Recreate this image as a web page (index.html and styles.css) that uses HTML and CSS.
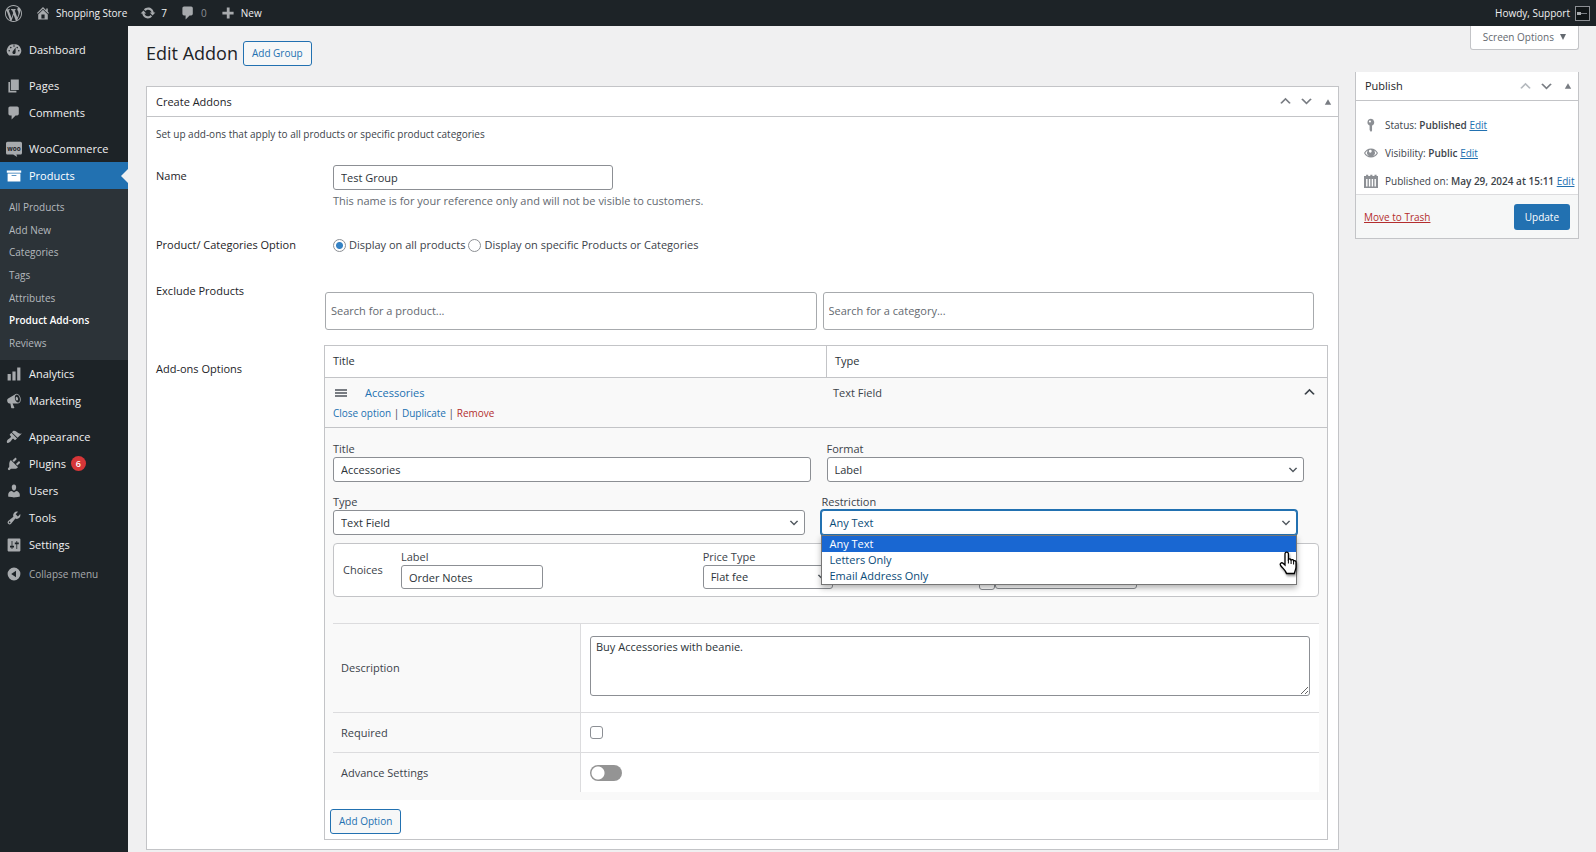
FILE: index.html
```
<!DOCTYPE html>
<html lang="en">
<head>
    <meta charset="UTF-8">
    <meta name="viewport" content="width=device-width, initial-scale=1.0">
    <title>Edit Addon - Shopping Store</title>
    <link rel="stylesheet" href="styles.css">
</head>
<body>
    <svg class="sprite" aria-hidden="true">
        <symbol id="i-down" viewBox="0 0 20 20"><path d="M5 6l5 5 5-5 2 1-7 7-7-7z"/></symbol>
        <symbol id="i-up" viewBox="0 0 20 20"><path d="M15 13l-5-5-5 5-2-1 7-7 7 7z"/></symbol>
        <symbol id="i-tri" viewBox="0 0 20 20"><path d="M2 17L10 3l8 14z"/></symbol>
        <symbol id="i-comment" viewBox="0 0 20 20"><path d="M5 2h9c1.1 0 2 .9 2 2v7c0 1.1-.9 2-2 2h-2l-5 5v-5H5c-1.1 0-2-.9-2-2V4c0-1.1.9-2 2-2z"/></symbol>
    </svg>

    <header class="adminbar">
        <a class="bar-item" href="#" aria-label="About WordPress"><svg class="icon icon-wp" viewBox="0 0 20 20"><path d="M20 10c0-5.51-4.49-10-10-10C4.48 0 0 4.49 0 10c0 5.52 4.48 10 10 10 5.51 0 10-4.48 10-10zM7.78 15.37L4.37 6.22c.55-.02 1.17-.08 1.17-.08.5-.06.44-1.13-.06-1.11 0 0-1.45.11-2.37.11-.18 0-.37 0-.58-.01C4.12 2.69 6.87 1.11 10 1.11c2.33 0 4.45.87 6.05 2.34-.68-.11-1.65.39-1.65 1.58 0 .74.45 1.36.9 2.1.35.61.55 1.36.55 2.46 0 1.49-1.4 5-1.4 5l-3.03-8.37c.54-.02.82-.17.82-.17.5-.05.44-1.25-.06-1.22 0 0-1.44.12-2.38.12-.87 0-2.33-.12-2.33-.12-.5-.03-.56 1.2-.06 1.22l.92.08 1.26 3.41zM17.41 10c.24-.64.74-1.87.43-4.25.7 1.29 1.05 2.71 1.05 4.25 0 3.29-1.73 6.24-4.4 7.78.97-2.59 1.94-5.2 2.92-7.78zM6.1 18.09C3.12 16.65 1.11 13.53 1.11 10c0-1.3.23-2.48.72-3.59C3.25 10.3 4.67 14.2 6.1 18.09zm4.03-6.63l2.58 6.98c-.86.29-1.76.45-2.71.45-.79 0-1.57-.11-2.29-.33.81-2.38 1.62-4.74 2.42-7.1z"/></svg></a>
        <a class="bar-item" href="#"><svg class="icon" viewBox="0 0 20 20"><path d="M16 8.5l1.53 1.53-1.06 1.06L10 4.6l-6.47 6.49-1.06-1.06L10 2.5l4 4v-2h2v4zm-6-2.46l6 5.99V18H4v-5.97zM12 17v-5H8v5h4z"/></svg>Shopping Store</a>
        <a class="bar-item" href="#"><svg class="icon" viewBox="0 0 20 20"><path d="M10.2 3.28c3.53 0 6.43 2.61 6.92 6h2.08l-3.5 4-3.5-4h2.32c-.45-1.97-2.21-3.45-4.32-3.45-1.45 0-2.73.71-3.54 1.78L4.95 5.66C6.23 4.2 8.11 3.28 10.2 3.28zm-.4 13.44c-3.52 0-6.43-2.61-6.92-6H.8l3.5-4c1.17 1.33 2.33 2.67 3.5 4H5.48c.45 1.97 2.21 3.45 4.32 3.45 1.45 0 2.73-.71 3.54-1.78l1.71 1.95c-1.28 1.46-3.15 2.38-5.25 2.38z"/></svg>7</a>
        <a class="bar-item dim" href="#"><svg class="icon"><use href="#i-comment"/></svg>0</a>
        <a class="bar-item" href="#"><svg class="icon" viewBox="0 0 20 20"><path d="M8.5 3h3.500v5.500H17V12h-5v5H8.500v-5H3V8.500h5.500z"/></svg>New</a>
        <a class="bar-item account" href="#">Howdy, Support<svg class="avatar" viewBox="0 0 15 15"><rect x=".5" y=".5" width="14" height="14" fill="#101517" stroke="#8c8f94"/><path d="M2 6h4v3H2z" fill="#a7aaad"/><path d="M6 7h6v1H6z" fill="#787c82"/></svg></a>
    </header>

    <div class="layout">
        <nav class="menu">
            <a class="menu-item" href="#"><svg class="icon" viewBox="0 0 20 20"><path fill-rule="evenodd" d="M3.76 17h12.48A7.998 7.998 0 0 0 10 3a7.998 7.998 0 0 0-6.24 14zM10 4c.55 0 1 .45 1 1s-.45 1-1 1-1-.45-1-1 .45-1 1-1zM6 6c.55 0 1 .45 1 1s-.45 1-1 1-1-.45-1-1 .45-1 1-1zm8 0c.55 0 1 .45 1 1s-.45 1-1 1-1-.45-1-1 .45-1 1-1zm-5.37 5.55L12 7v6c0 1.1-.9 2-2 2s-2-.9-2-2c0-.57.24-1.08.63-1.45zM4 10c.55 0 1 .45 1 1s-.45 1-1 1-1-.45-1-1 .45-1 1-1zm12 0c.55 0 1 .45 1 1s-.45 1-1 1-1-.45-1-1 .45-1 1-1z"/></svg>Dashboard</a>
            <a class="menu-item gap" href="#"><svg class="icon" viewBox="0 0 20 20"><path d="M6 15V2h10v13H6zm-1 1h8v2H3V5h2v11z"/></svg>Pages</a>
            <a class="menu-item" href="#"><svg class="icon"><use href="#i-comment"/></svg>Comments</a>
            <a class="menu-item gap" href="#"><svg class="icon" viewBox="0 0 20 20"><path d="M2 1h16c1.1 0 2 .9 2 2v12c0 1.1-.9 2-2 2h-5l1 3-5-3H2c-1.1 0-2-.9-2-2V3c0-1.1.9-2 2-2z"/><text class="woo" x="10" y="12" text-anchor="middle">woo</text></svg>WooCommerce</a>
            <a class="menu-item current" href="#"><svg class="icon" viewBox="0 0 20 20"><path d="M19 3v3H1V3h18zM2 7h16v10H2V7zm11 3V9H7v1h6z"/></svg>Products</a>
            <div class="submenu">
                <a href="#">All Products</a>
                <a href="#">Add New</a>
                <a href="#">Categories</a>
                <a href="#">Tags</a>
                <a href="#">Attributes</a>
                <a class="active" href="#">Product Add-ons</a>
                <a href="#">Reviews</a>
            </div>
            <a class="menu-item" href="#"><svg class="icon" viewBox="0 0 20 20"><path d="M18 18V2h-4v16h4zm-6 0V7H8v11h4zm-6 0v-8H2v8h4z"/></svg>Analytics</a>
            <a class="menu-item" href="#"><svg class="icon" viewBox="0 0 20 20"><path d="M18.15 5.94c.46 1.62.38 3.22-.02 4.48-.42 1.28-1.26 2.18-2.3 2.48-.16.06-.26.06-.4.06-.06.02-.12.02-.18.02-.06.02-.14.02-.22.02h-6.8l2.22 5.5c.02.14-.06.26-.14.34-.08.1-.24.16-.34.16H6.95c-.1 0-.26-.06-.34-.16-.08-.08-.16-.2-.14-.34l-1-5.5H4.25l-.02-.02c-.5.06-1.08-.18-1.54-.62s-.88-1.08-1.06-1.88c-.24-.8-.2-1.56-.02-2.2.18-.62.58-1.08 1.06-1.3l.02-.02 9-5.4c.1-.06.18-.1.24-.16.06-.04.14-.08.24-.12.16-.08.28-.12.5-.18 1.04-.3 2.24.1 3.22.98s1.84 2.24 2.26 3.86zm-2.58 5.98h-.02c.4-.1.74-.34 1.04-.7.58-.7.86-1.76.86-3.04 0-.64-.1-1.3-.28-1.98-.34-1.36-1.02-2.5-1.78-3.24s-1.68-1.1-2.46-.88c-.82.22-1.4.96-1.7 2-.32 1.04-.28 2.36.06 3.72.38 1.36 1 2.5 1.8 3.24.78.74 1.62 1.1 2.48.88zm-2.54-7.08c.22-.04.42-.02.62.04.38.16.76.48 1.02 1s.42 1.2.42 1.78c0 .3-.04.56-.12.8-.18.48-.44.84-.86.94-.34.1-.8-.06-1.14-.4s-.64-.86-.78-1.5c-.18-.62-.12-1.24.02-1.72s.48-.84.82-.94z"/></svg>Marketing</a>
            <a class="menu-item gap" href="#"><svg class="icon" viewBox="0 0 20 20"><path d="M14.48 11.06L7.41 3.99l1.5-1.5c.5-.56 2.3-.47 3.51.32 1.21.8 1.43 1.28 2.91 2.1 1.18.64 2.45 1.26 4.45.85zm-.71.71L6.7 4.7 4.93 6.47c-.39.39-.39 1.02 0 1.41l1.06 1.06c.39.39.39 1.03 0 1.42-.6.6-1.43 1.11-2.21 1.69-.35.26-.7.53-1.01.84C1.43 14.23.4 16.08 1.4 17.07c.99 1 2.84-.03 4.18-1.36.31-.31.58-.66.85-1.02.57-.78 1.08-1.61 1.69-2.21.39-.39 1.02-.39 1.41 0l1.06 1.06c.39.39 1.02.39 1.41 0z"/></svg>Appearance</a>
            <a class="menu-item" href="#"><svg class="icon" viewBox="0 0 20 20"><path d="M13.11 4.36L9.87 7.6 8 5.73l3.24-3.24c.35-.34 1.05-.2 1.56.32.52.51.66 1.21.31 1.55zm-8 1.77l.91-1.12 9.01 9.01-1.19.84c-.71.71-2.63 1.16-3.82 1.16H6.14L4.9 17.26c-.59.59-1.54.59-2.12 0-.59-.58-.59-1.53 0-2.12l1.24-1.24v-3.88c0-1.13.4-3.19 1.09-3.89zm7.26 3.97l3.24-3.24c.34-.35 1.04-.21 1.55.31.52.51.66 1.21.31 1.55l-3.24 3.25z"/></svg>Plugins<span class="count">6</span></a>
            <a class="menu-item" href="#"><svg class="icon" viewBox="0 0 20 20"><path d="M10 9.25c-2.27 0-2.73-3.44-2.73-3.44C7 4.02 7.82 2 9.97 2c2.16 0 2.98 2.02 2.71 3.81 0 0-.41 3.44-2.68 3.44zm0 2.57L12.72 10c2.39 0 4.52 2.33 4.52 4.53v2.49s-3.65 1.13-7.24 1.13c-3.65 0-7.24-1.13-7.24-1.13v-2.49c0-2.25 1.94-4.48 4.47-4.48z"/></svg>Users</a>
            <a class="menu-item" href="#"><svg class="icon" viewBox="0 0 20 20"><path fill-rule="evenodd" d="M16.68 9.77c-1.34 1.34-3.3 1.67-4.95.99l-5.41 6.52c-.99.99-2.59.99-3.58 0s-.99-2.59 0-3.57l6.52-5.42c-.68-1.65-.35-3.61.99-4.95 1.28-1.28 3.12-1.62 4.72-1.06l-2.89 2.89 2.82 2.82 2.86-2.87c.53 1.58.18 3.39-1.08 4.65zM3.81 16.21c.4.39 1.04.39 1.43 0 .4-.4.4-1.04 0-1.43-.39-.4-1.03-.4-1.43 0-.39.39-.39 1.03 0 1.43z"/></svg>Tools</a>
            <a class="menu-item" href="#"><svg class="icon" viewBox="0 0 20 20"><path fill-rule="evenodd" d="M18 17V3c0-.6-.4-1-1-1H3c-.6 0-1 .4-1 1v14c0 .6.4 1 1 1h14c.6 0 1-.4 1-1zM8 11h2v2H8v2H7v-2H5v-2h2V5h1v6zm5-2h-2V7h2V5h1v2h2v2h-2v6h-1V9z"/></svg>Settings</a>
            <button class="collapse" type="button"><svg class="icon" viewBox="0 0 20 20"><path fill-rule="evenodd" d="M10 2a8 8 0 1 0 0 16 8 8 0 0 0 0-16zm2.500 4v8L6.500 10z"/></svg>Collapse menu</button>
        </nav>

        <main class="content">
            <div class="screen-meta"><button class="screen-options" type="button">Screen Options<svg class="caret" viewBox="0 0 8 8"><path d="M0 0h8L4 8z"/></svg></button></div>
            <div class="heading">
                <h1>Edit Addon</h1>
                <a class="button" href="#">Add Group</a>
            </div>

            <div class="columns">
                <section class="postbox main-box">
                    <div class="box-head">
                        <h2>Create Addons</h2>
                        <button type="button" aria-label="Move up"><svg><use href="#i-up"/></svg></button>
                        <button type="button" aria-label="Move down"><svg><use href="#i-down"/></svg></button>
                        <button class="tri" type="button" aria-label="Toggle panel"><svg><use href="#i-tri"/></svg></button>
                    </div>
                    <form class="box-body">
                        <p class="intro">Set up add-ons that apply to all products or specific product categories</p>

                        <div class="form-row row-name">
                            <label class="row-label" for="name">Name</label>
                            <div class="row-field">
                                <input id="name" class="control name-input" type="text" value="Test Group">
                                <p class="help">This name is for your reference only and will not be visible to customers.</p>
                            </div>
                        </div>

                        <div class="form-row row-scope">
                            <span class="row-label">Product/ Categories Option</span>
                            <div class="row-field radios">
                                <input id="scope-all" type="radio" name="scope" checked>
                                <label for="scope-all">Display on all products</label>
                                <input id="scope-some" type="radio" name="scope">
                                <label for="scope-some">Display on specific Products or Categories</label>
                            </div>
                        </div>

                        <div class="form-row row-exclude">
                            <span class="row-label">Exclude Products</span>
                            <div class="excludes">
                                <input class="search" type="text" placeholder="Search for a product..." aria-label="Search for a product">
                                <input class="search" type="text" placeholder="Search for a category..." aria-label="Search for a category">
                            </div>
                        </div>

                        <div class="form-row">
                            <span class="row-label options-label">Add-ons Options</span>
                            <div class="addons">
                                <div class="addons-head">
                                    <span>Title</span>
                                    <span>Type</span>
                                </div>
                                <div class="option-bar">
                                    <div>
                                        <div class="option-title"><svg class="grip" viewBox="0 0 12 9"><path d="M0 0h12v2H0zM0 3h12v2H0zM0 6h12v2H0z"/></svg><a href="#">Accessories</a></div>
                                        <div class="actions"><a href="#">Close option</a> | <a href="#">Duplicate</a> | <a class="danger" href="#">Remove</a></div>
                                    </div>
                                    <div class="option-type">Text Field<button type="button" aria-label="Close option"><svg><use href="#i-up"/></svg></button></div>
                                </div>

                                <div class="option-body">
                                    <div class="pair pair-top">
                                        <div class="field">
                                            <label for="title">Title</label>
                                            <input id="title" class="control" type="text" value="Accessories">
                                        </div>
                                        <div class="field">
                                            <label for="format">Format</label>
                                            <span class="select"><select id="format" class="control"><option>Label</option><option>Heading</option></select><svg><use href="#i-down"/></svg></span>
                                        </div>
                                    </div>
                                    <div class="pair pair-bottom">
                                        <div class="field">
                                            <label for="type">Type</label>
                                            <span class="select"><select id="type" class="control"><option>Text Field</option></select><svg><use href="#i-down"/></svg></span>
                                        </div>
                                        <div class="field restriction">
                                            <label for="restriction">Restriction</label>
                                            <span class="select"><select id="restriction" class="control focused"><option>Any Text</option><option>Letters Only</option><option>Email Address Only</option></select><svg><use href="#i-down"/></svg></span>
                                            <ul class="dropdown">
                                                <li class="selected">Any Text</li>
                                                <li>Letters Only</li>
                                                <li>Email Address Only</li>
                                            </ul>
                                            <svg class="pointer" viewBox="0 0 18 24"><path d="M6 14V3c0-2.600 3.400-2.600 3.400 0v5.500c1-.9 2.400-.6 2.700.5 1-.7 2.300-.3 2.500.8 1.200-.5 2.400.2 2.400 1.500V16c0 3-1.400 3.800-1.700 6.500H7.500C7 20 4.500 18 1.600 14.500.4 12.600 2.500 11 4 12.300z" fill="#fff" stroke="#000" stroke-width="1.300"/><path d="M9.400 8.500v4M12.100 9v4M14.600 10v3.500" fill="none" stroke="#000"/></svg>
                                        </div>
                                    </div>

                                    <div class="choices">
                                        <span class="choices-name">Choices</span>
                                        <div class="field">
                                            <label for="choice">Label</label>
                                            <input id="choice" class="control choice-input" type="text" value="Order Notes">
                                        </div>
                                        <div class="field">
                                            <label for="price-type">Price Type</label>
                                            <span class="select price-type"><select id="price-type" class="control"><option>Flat fee</option></select><svg><use href="#i-down"/></svg></span>
                                        </div>
                                        <div class="price">
                                            <input type="checkbox" aria-label="Use price">
                                            <input class="control price-input" type="text" aria-label="Price">
                                        </div>
                                    </div>

                                    <div class="settings">
                                        <label class="setting-name tall" for="description">Description</label>
                                        <div class="setting-value tall"><textarea id="description" class="control">Buy Accessories with beanie.</textarea></div>
                                        <label class="setting-name" for="required">Required</label>
                                        <div class="setting-value"><input id="required" type="checkbox"></div>
                                        <label class="setting-name" for="advance">Advance Settings</label>
                                        <div class="setting-value"><input id="advance" class="toggle" type="checkbox"></div>
                                    </div>
                                </div>

                                <div class="addons-foot"><button class="button" type="button">Add Option</button></div>
                            </div>
                        </div>
                    </form>
                </section>

                <aside class="postbox publish">
                    <div class="box-head">
                        <h2>Publish</h2>
                        <button class="muted" type="button" aria-label="Move up"><svg><use href="#i-up"/></svg></button>
                        <button type="button" aria-label="Move down"><svg><use href="#i-down"/></svg></button>
                        <button class="tri" type="button" aria-label="Toggle panel"><svg><use href="#i-tri"/></svg></button>
                    </div>
                    <div class="publish-body">
                        <p><svg viewBox="0 0 20 20"><path fill-rule="evenodd" d="M10 1a5 5 0 0 0-2 9.600V17l2 3 1.500-2v-7.400A5 5 0 0 0 10 1zM8.500 3.500a1.500 1.500 0 1 1 0 3 1.500 1.500 0 0 1 0-3z"/></svg><span>Status: <b>Published</b> <a href="#">Edit</a></span></p>
                        <p><svg viewBox="0 0 20 20"><path fill-rule="evenodd" d="M10 3.500C5.500 3.500 2 6 0 10c2 4 5.500 6.500 10 6.500S18 14 20 10c-2-4-5.500-6.500-10-6.500zM5.500 6.500a5.500 5.500 0 0 0 1.500 7.700C4.500 13.300 3 12 1.800 10c.9-1.500 2.200-2.700 3.700-3.500zm9 0c1.500.8 2.800 2 3.700 3.500-1.200 2-2.700 3.300-5.200 4.200a5.500 5.500 0 0 0 1.500-7.700zM9 5.500a2 2 0 1 1 0 4 2 2 0 0 1 0-4z"/></svg><span>Visibility: <b>Public</b> <a href="#">Edit</a></span></p>
                        <p><svg viewBox="0 0 20 20"><path fill-rule="evenodd" d="M3 1h3v2h3V1h3v2h3V1h3v2h2v17H0V3h3zM3 7v11h2V7zm4 0v11h2V7zm4 0v11h2V7zm4 0v11h2V7z"/></svg><span>Published on: <b>May 29, 2024 at 15:11</b> <a href="#">Edit</a></span></p>
                    </div>
                    <div class="publish-foot">
                        <a class="danger" href="#">Move to Trash</a>
                        <button class="primary" type="button">Update</button>
                    </div>
                </aside>
            </div>
        </main>
    </div>
</body>
</html>
```
FILE: styles.css
```
* {
    box-sizing: border-box;
}

body {
    margin: 0;
    background: #f0f0f1;
    color: #3c434a;
    font-family: "Open Sans", "Noto Sans", sans-serif;
    font-size: 11px;
    line-height: 16px;
}

h1,
h2,
p,
ul {
    margin: 0;
    padding: 0;
    font-weight: 400;
}

a {
    color: #2271b1;
}

button,
input,
select,
textarea {
    font: inherit;
    color: inherit;
    margin: 0;
}

button {
    border: 0;
    background: none;
    padding: 0;
}

svg {
    fill: currentColor;
    flex: none;
}

.sprite {
    display: none;
}

.icon {
    width: 16px;
    height: 16px;
    color: #a7aaad;
}

/* Top bar */
.adminbar {
    display: flex;
    align-items: center;
    gap: 13px;
    height: 26px;
    padding: 0 6px 0 5px;
    background: #1d2327;
}

.bar-item {
    display: flex;
    align-items: center;
    gap: 5px;
    color: #f0f0f1;
    font-size: 10px;
    font-weight: 500;
    text-decoration: none;
}

.icon-wp {
    width: 17px;
    height: 17px;
}

.bar-item.dim {
    color: #8c8f94;
}

.account {
    margin-left: auto;
}

.avatar {
    width: 15px;
    height: 15px;
}

.layout {
    display: flex;
    min-height: calc(100vh - 26px);
}

/* Side menu */
.menu {
    flex: none;
    width: 128px;
    padding-top: 10px;
    background: #1d2327;
}

.menu-item {
    position: relative;
    display: flex;
    align-items: center;
    gap: 7px;
    height: 27px;
    padding-left: 6px;
    color: #f0f0f1;
    font-size: 11px;
    font-weight: 500;
    text-decoration: none;
}

.menu-item.gap {
    margin-top: 9px;
}

.woo {
    fill: #1d2327;
    font-size: 8px;
    font-weight: 700;
}

.current {
    background: #2271b1;
    color: #fff;
}

.current .icon {
    color: #fff;
}

.current::after {
    content: "";
    position: absolute;
    right: 0;
    border: 7px solid transparent;
    border-left-width: 0;
    border-right-color: #f0f0f1;
}

.submenu {
    display: grid;
    padding: 7px 0 6px;
    height: 171px;
    background: #2c3338;
    font-size: 10px;
}

.submenu a {
    display: flex;
    align-items: center;
    padding-left: 9px;
    color: #b4b9be;
    text-decoration: none;
}

.submenu .active {
    color: #fff;
    font-weight: 600;
}

.count {
    width: 15px;
    height: 15px;
    margin-left: -2px;
    border-radius: 50%;
    background: #d63638;
    color: #fff;
    font-size: 9px;
    font-weight: 600;
    line-height: 15px;
    text-align: center;
}

.collapse {
    display: flex;
    align-items: center;
    gap: 7px;
    height: 27px;
    margin-top: 2px;
    padding-left: 6px;
    color: #a7aaad;
    font-size: 10px;
}

/* Page heading */
.content {
    flex: 1;
    min-width: 0;
    padding: 0 17px 4px 18px;
}

.screen-meta {
    display: flex;
    justify-content: flex-end;
    height: 13px;
}

.screen-options {
    display: flex;
    align-items: center;
    gap: 6px;
    height: 24px;
    padding: 0 12px 2px;
    border: 1px solid #c3c4c7;
    border-top: 0;
    border-radius: 0 0 3px 3px;
    background: #fff;
    color: #646970;
    font-size: 10px;
}

.caret {
    width: 6px;
    height: 6px;
}

.heading {
    display: flex;
    align-items: center;
    gap: 5px;
    height: 28px;
}

h1 {
    color: #1d2327;
    font-size: 18px;
    line-height: 26px;
}

.button {
    display: inline-block;
    height: 25px;
    padding: 0 8px;
    border: 1px solid #2271b1;
    border-radius: 3px;
    background: #f6f7f7;
    color: #2271b1;
    font-size: 10px;
    line-height: 23px;
    text-decoration: none;
}

/* Boxes */
.columns {
    display: grid;
    grid-template-columns: minmax(0, 1fr) 224px;
    gap: 16px;
    align-items: start;
    padding-top: 5px;
}

.postbox {
    border: 1px solid #c3c4c7;
    background: #fff;
}

.main-box {
    margin-top: 14px;
}

.box-head {
    display: flex;
    align-items: center;
    gap: 6px;
    height: 30px;
    padding: 0 5px 0 9px;
    border-bottom: 1px solid #c3c4c7;
    color: #787c82;
}

.box-head h2 {
    flex: 1;
    color: #1d2327;
    font-size: 11px;
    font-weight: 500;
}

.box-head button,
.option-type button {
    display: flex;
    align-items: center;
    justify-content: center;
    width: 15px;
    height: 15px;
}

.box-head svg,
.option-type svg {
    width: 15px;
    height: 15px;
}

.box-head .tri {
    width: 10px;
    margin-left: 3px;
}

.box-head .tri svg {
    width: 8px;
    height: 8px;
}

.box-head .muted {
    color: #b4b9be;
}

.box-body {
    padding: 9px 10px 9px 9px;
}

.intro {
    font-size: 10px;
}

/* Form rows */
.form-row {
    display: grid;
    grid-template-columns: 168px minmax(0, 1fr);
}

.row-label {
    color: #1d2327;
    font-weight: 500;
}

.row-name {
    padding-top: 23px;
}

.row-name .row-label {
    padding-top: 3px;
}

.row-field {
    padding-left: 9px;
}

.control {
    display: block;
    width: 100%;
    height: 25px;
    padding: 0 7px;
    border: 1px solid #8c8f94;
    border-radius: 3px;
    background: #fff;
    color: #2c3338;
    outline: 0;
}

.name-input {
    width: 280px;
}

.help {
    padding-top: 3px;
    color: #646970;
}

.row-scope {
    padding-top: 28px;
}

.radios {
    display: flex;
    align-items: center;
    gap: 3px;
}

input[type="radio"],
input[type="checkbox"] {
    appearance: none;
    flex: none;
    width: 13px;
    height: 13px;
    border: 1px solid #8c8f94;
    border-radius: 3px;
    background: #fff;
}

input[type="radio"] {
    border-radius: 50%;
}

input[type="radio"]:checked {
    background: radial-gradient(circle, #3582c4 3px, #fff 4px);
}

.row-exclude {
    padding: 30px 0 15px;
}

.excludes {
    display: grid;
    grid-template-columns: 1fr 1fr;
    gap: 6px;
    padding: 9px 14px 0 1px;
}

.search {
    min-width: 0;
    height: 38px;
    padding: 0 5px 2px;
    border: 1px solid #a7aaad;
    border-radius: 3px;
    background: #fff;
}

.search::placeholder {
    color: #646970;
    opacity: 1;
}

.options-label {
    padding-top: 16px;
}

/* Addon options */
.addons {
    border: 1px solid #c3c4c7;
}

.addons-head,
.option-bar {
    display: grid;
    grid-template-columns: minmax(0, 1fr) minmax(0, 1fr);
    border-bottom: 1px solid #c3c4c7;
}

.addons-head {
    color: #2c3338;
    font-weight: 500;
}

.addons-head span {
    padding: 7px 8px 8px;
}

.addons-head span + span {
    border-left: 1px solid #c3c4c7;
}

.option-bar {
    height: 50px;
    padding: 7px 10px 0 8px;
    background: #f9f9f9;
}

.option-title {
    display: flex;
    align-items: center;
    gap: 18px;
    padding-left: 2px;
    color: #787c82;
    font-weight: 500;
}

.grip {
    width: 12px;
    height: 9px;
}

.option-bar a {
    text-decoration: none;
}

.actions {
    padding-top: 4px;
    font-size: 10px;
}

.danger {
    color: #b32d2e;
}

.option-type {
    display: flex;
    justify-content: space-between;
    padding-left: 8px;
}

.option-body {
    padding: 13px 8px 8px;
    background: #f9f9f9;
}

.pair {
    display: grid;
}

.pair-top {
    grid-template-columns: minmax(0, 1fr) minmax(0, 1fr);
    gap: 16px;
    padding-right: 15px;
}

.pair-bottom {
    grid-template-columns: minmax(0, 472fr) minmax(0, 475fr);
    gap: 16px;
    padding: 12px 22px 0 0;
}

.field {
    min-width: 0;
}

.field label {
    display: block;
}

.select {
    display: grid;
    align-items: center;
}

.select select,
.select svg {
    grid-area: 1 / 1;
}

.select select {
    appearance: none;
}

.select svg {
    justify-self: end;
    width: 12px;
    height: 12px;
    margin-right: 5px;
    color: #50575e;
    pointer-events: none;
}

.restriction {
    position: relative;
}

.focused {
    border-color: #2271b1;
    box-shadow: 0 0 0 1px #2271b1;
    color: #0a4b78;
}

.dropdown {
    position: absolute;
    z-index: 2;
    top: 41px;
    left: 0;
    right: 0;
    border: 1px solid #767676;
    background: #fff;
    box-shadow: 0 3px 6px rgba(0, 0, 0, 0.3);
    color: #0a4b78;
    list-style: none;
}

.dropdown li {
    padding-left: 7px;
}

.dropdown .selected {
    background: #1967d2;
    color: #fff;
}

.pointer {
    position: absolute;
    z-index: 3;
    top: 57px;
    right: 0;
    width: 18px;
    height: 24px;
    filter: drop-shadow(1px 2px 1px rgba(0, 0, 0, 0.4));
}

.choices {
    display: grid;
    grid-template-columns: 58px 305fr 279fr 334fr;
    align-items: start;
    padding: 5px 9px 6px;
    margin-top: 8px;
    border: 1px solid #c3c4c7;
    border-radius: 4px;
    background: #fff;
}

.choices-name {
    padding-top: 13px;
}

.choices .control {
    height: 24px;
}

.choice-input {
    width: 142px;
}

.price-type {
    width: 130px;
}

.price {
    display: flex;
    padding-top: 16px;
}

.price input[type="checkbox"] {
    width: 16px;
    height: 25px;
}

.price .price-input {
    width: 142px;
}

.settings {
    display: grid;
    grid-template-columns: 248px minmax(0, 1fr);
    margin-top: 26px;
}

.setting-name,
.setting-value {
    display: flex;
    align-items: center;
    height: 40px;
    border-top: 1px solid #dcdcde;
}

.setting-name {
    padding-left: 8px;
}

.setting-value {
    padding: 0 9px;
    margin-left: -1px;
    border-left: 1px solid #dcdcde;
    background: #fff;
}

.tall {
    height: 89px;
}

.setting-value.tall {
    align-items: flex-start;
    padding-top: 12px;
}

.setting-value textarea {
    height: 60px;
    padding: 2px 5px;
    resize: vertical;
}

.setting-value .toggle {
    width: 32px;
    height: 16px;
    border: 0;
    border-radius: 8px;
    background: radial-gradient(circle at 8px 8px, #fff 6px, #949494 7px);
}

.addons-foot {
    padding: 9px 5px 5px;
}

.addons-foot .button {
    display: block;
}

/* Publish box */
.publish {
    border-top: 0;
}

.publish .box-head {
    height: 29px;
}

.publish-body {
    display: grid;
    gap: 12px;
    padding: 16px 8px 5px;
    font-size: 10px;
}

.publish-body p {
    display: flex;
    align-items: center;
    gap: 7px;
    white-space: nowrap;
}

.publish-body svg {
    width: 14px;
    height: 14px;
    color: #8c8f94;
}

.publish-body b {
    font-weight: 600;
}

.publish-foot {
    display: flex;
    align-items: center;
    justify-content: space-between;
    height: 44px;
    padding: 0 8px;
    border-top: 1px solid #dcdcde;
    background: #f6f7f7;
    font-size: 10px;
}

.primary {
    height: 26px;
    padding: 0 11px;
    border-radius: 3px;
    background: #2271b1;
    color: #fff;
    font-weight: 500;
}
```
